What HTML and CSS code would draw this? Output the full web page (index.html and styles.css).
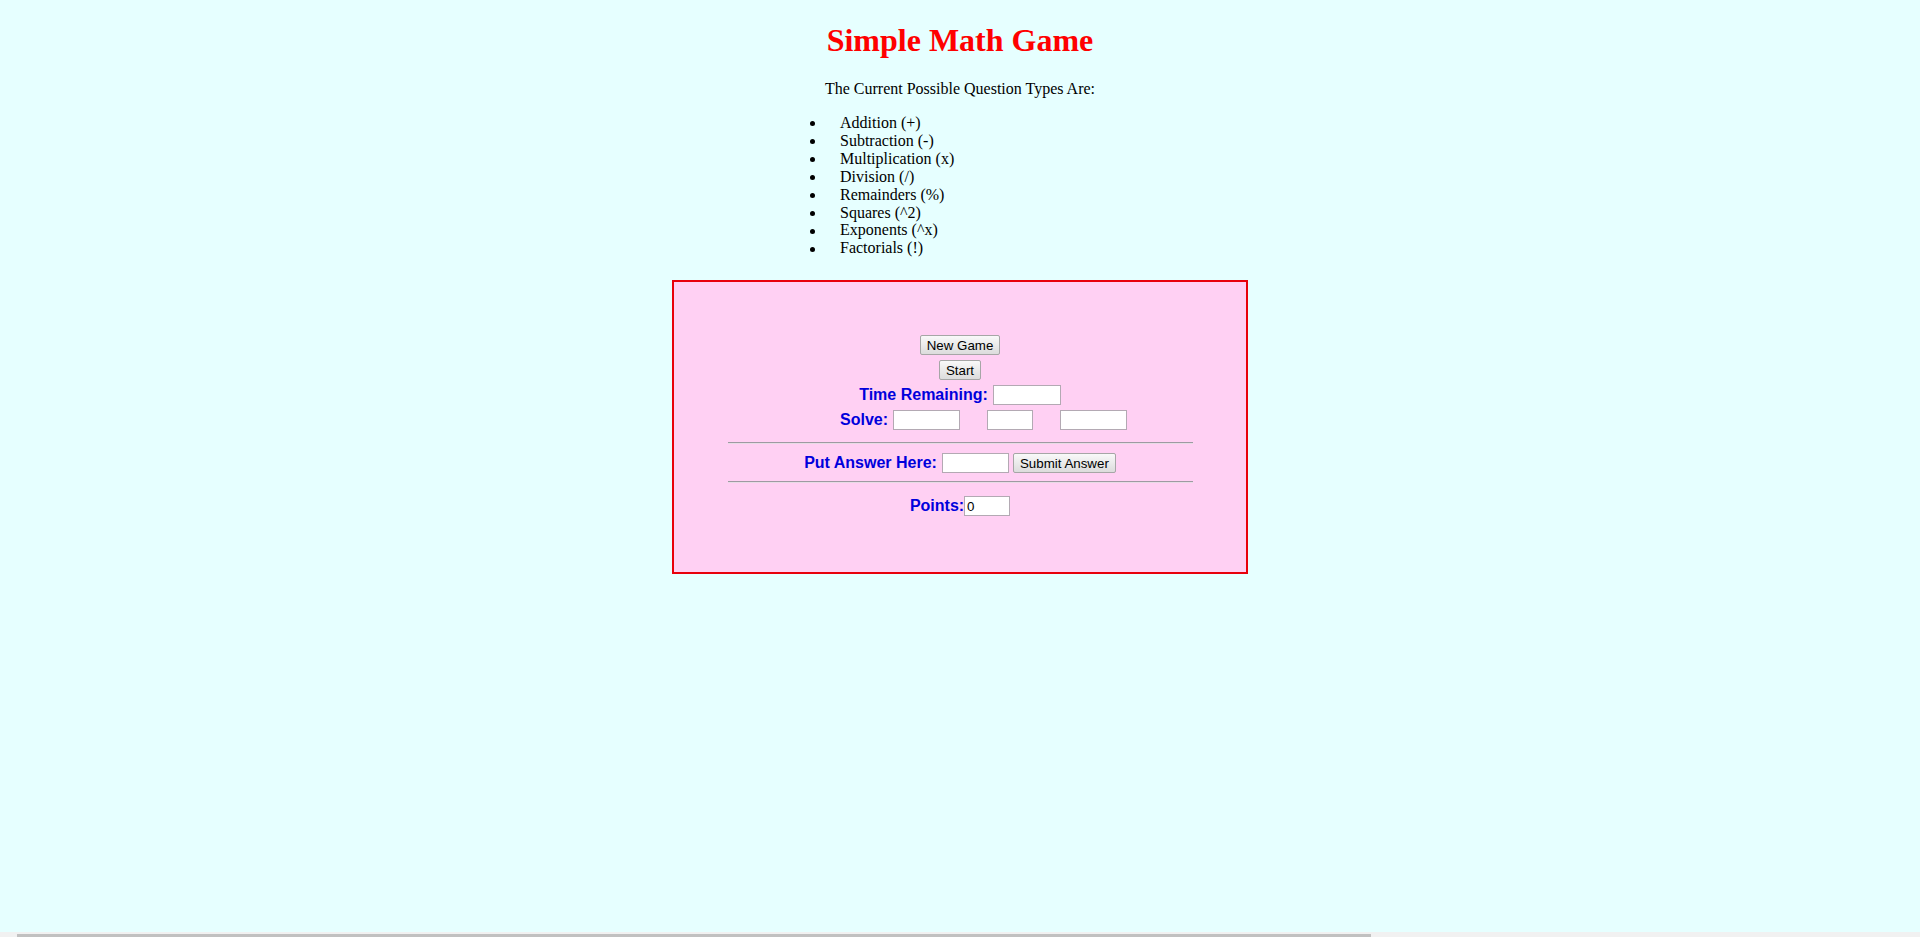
FILE: index.html
```html
<!DOCTYPE html>
<html lang="en">
<head>
<meta charset="utf-8">
<title>Simple Math Game</title>
<link rel="stylesheet" href="styles.css">
</head>
<body>
  <h1 class="title">Simple Math Game</h1>
  <p class="intro">The Current Possible Question Types Are:</p>
  <ul class="types">
    <li>Addition (+)</li>
    <li>Subtraction (-)</li>
    <li>Multiplication (x)</li>
    <li>Division (/)</li>
    <li>Remainders (%)</li>
    <li>Squares (^2)</li>
    <li>Exponents (^x)</li>
    <li>Factorials (!)</li>
  </ul>

  <div class="game">
    <div class="row"><button class="btn">New Game</button></div>
    <div class="row"><button class="btn">Start</button></div>
    <div class="row">
      <span class="label">Time Remaining:</span>
      <input class="field w-time gap-l" type="text">
    </div>
    <div class="row row-solve">
      <span class="label">Solve:</span>
      <input class="field w-wide gap-l" type="text">
      <input class="field w-narrow gap-op" type="text">
      <input class="field w-wide gap-op" type="text">
    </div>
    <hr class="rule rule-1">
    <div class="row row-answer">
      <span class="label">Put Answer Here:</span>
      <input class="field w-wide gap-l" type="text">
      <button class="btn gap-btn">Submit Answer</button>
    </div>
    <hr class="rule rule-2">
    <div class="row row-points">
      <span class="label">Points:</span>
      <input class="field w-narrow" type="text" value="0">
    </div>
  </div>

  <div class="hscroll"><div class="hscroll-thumb"></div></div>
</body>
</html>
```

FILE: styles.css
```css
html {
  background: #e6ffff;
}

body {
  margin: 8px;
  background: #e6ffff;
  font-family: "Liberation Serif", "Times New Roman", serif;
  font-size: 16px;
  color: #000;
}

.title {
  margin: 14px 0 21px;
  font-size: 32px;
  line-height: 37px;
  font-weight: bold;
  color: #f00;
  text-align: center;
}

.intro {
  margin: 0;
  line-height: 18px;
  text-align: center;
}

.types {
  margin: 16px 0 0 calc(50% - 160px);
  padding-left: 40px;
  line-height: 17.9px;
  list-style: none;
}

.types li::before {
  content: "";
  display: inline-block;
  width: 5px;
  height: 5px;
  margin-left: -30px;
  margin-right: 25px;
  border-radius: 50%;
  background: #000;
  vertical-align: 1.7px;
}

.game {
  box-sizing: border-box;
  width: 576px;
  margin: 22.8px auto 0;
  padding: 53px 0 56px;
  background: #ffd0f3;
  border: 2px solid #e8000b;
}

.row {
  display: flex;
  justify-content: center;
  align-items: center;
  height: 20px;
  margin-bottom: 5px;
  font-family: "Liberation Sans", Arial, sans-serif;
}

.row-solve {
  margin-bottom: 0;
  padding-left: 47px;
}

.row-answer {
  margin: 9px 0 0;
}

.row-points {
  margin: 13px 0 0;
}

.label {
  font-size: 16px;
  font-weight: bold;
  line-height: 18px;
  color: #0000dc;
}

.btn {
  box-sizing: border-box;
  height: 20px;
  padding: 0 6px;
  font-family: "Liberation Sans", Arial, sans-serif;
  font-size: 13.33px;
  color: #000;
  background: linear-gradient(#f9f9f9, #dcdcdc);
  border: 1px solid #a6a6a6;
  border-radius: 2px;
}

.field {
  box-sizing: border-box;
  height: 20px;
  padding: 1px 2px;
  margin: 0;
  font-family: "Liberation Sans", Arial, sans-serif;
  font-size: 13.33px;
  color: #000;
  background: #fff;
  border: 1px solid #b3a9b3;
  border-radius: 0;
}

.w-time { width: 68px; }
.w-wide { width: 67px; }
.w-narrow { width: 46px; }

.gap-l { margin-left: 5px; }
.gap-op { margin-left: 27px; }
.gap-btn { margin-left: 4px; }

.rule {
  width: 465px;
  height: 0;
  padding: 0;
  border: 0;
  border-top: 1px solid #9e9aa2;
  border-bottom: 1px solid #e8dbe6;
}

.rule-1 { margin: 12px auto 0; }
.rule-2 { margin: 8px auto 0; }

.hscroll {
  position: fixed;
  left: 0;
  right: 0;
  bottom: 0;
  height: 5px;
  background: #f1f1f1;
}

.hscroll-thumb {
  width: 1354px;
  height: 3px;
  margin: 2px 0 0 17px;
  background: #c1c1c1;
}
```
